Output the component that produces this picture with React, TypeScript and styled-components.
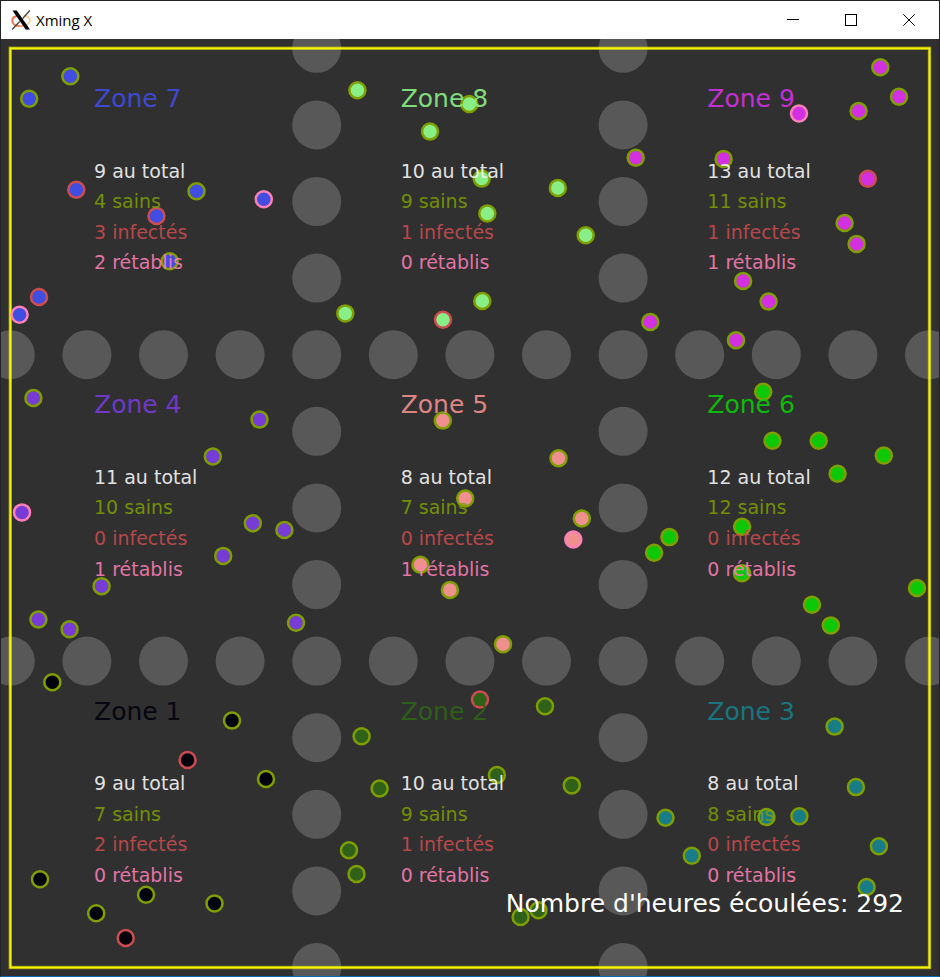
import React from "react";
import styled, { createGlobalStyle } from "styled-components";

const GlobalStyle = createGlobalStyle`
  body {
    margin: 0;
    background: #1f1e20;
    font-family: "DejaVu Sans", Verdana, sans-serif;
  }
`;

type Status = "sain" | "infecte" | "retabli";

const statusColor: Record<Status, string> = {
  sain: "#7f9f00",
  infecte: "#cc4c50",
  retabli: "#ff80b8",
};

/* x, y and, when the person is not healthy, the status */
type Person = [number, number, Status?];

interface Zone {
  id: number;
  color: string;
  people: Person[];
}

const zones: Zone[] = [
  {
    id: 7,
    color: "#414ce0",
    people: [
      [70.3, 76.3], [29.2, 98.7], [76.3, 189.7, "infecte"], [196.5, 191.3],
      [263.8, 199.2, "retabli"], [156.5, 216, "infecte"], [169.7, 261.3],
      [39, 297, "infecte"], [19.6, 314.7, "retabli"],
    ],
  },
  {
    id: 8,
    color: "#8aee86",
    people: [
      [357.4, 90.2], [469.3, 104], [430, 131.6], [481.7, 178.6], [557.8, 188],
      [487.3, 213.5], [585.7, 235.3], [482.3, 301], [345.3, 313.4],
      [443, 319.8, "infecte"],
    ],
  },
  {
    id: 9,
    color: "#d330e2",
    people: [
      [880.3, 67.3], [899, 96.7], [858.6, 111], [799, 113.5, "retabli"],
      [635.7, 157.7], [723.6, 159], [867.8, 178.8, "infecte"], [844.6, 223],
      [856.6, 243.9], [743.1, 281], [768.6, 301.6], [650.3, 322], [736, 340.2],
    ],
  },
  {
    id: 4,
    color: "#773bd6",
    people: [
      [33.4, 398], [259.5, 419.6], [212.8, 456.5], [22, 512.4, "retabli"],
      [252.8, 523.2], [284.4, 530], [223.2, 555.9], [101.6, 586.2],
      [38.4, 619.5], [69.6, 629.3], [296, 622.7],
    ],
  },
  {
    id: 5,
    color: "#ef8f8e",
    people: [
      [442.8, 420.6], [558.5, 458.2], [465.2, 498.5], [581.8, 518.5],
      [573.3, 539.5, "retabli"], [420.4, 564.8], [449.9, 590], [503, 644.2],
    ],
  },
  {
    id: 6,
    color: "#0cc807",
    people: [
      [763.2, 391.8], [772.5, 440.7], [818.7, 440.7], [883.8, 455.5],
      [837.6, 473.8], [742.1, 526.8], [669.4, 537.1], [654.1, 552.7],
      [742, 573.3], [917, 588], [812, 604.8], [830.8, 625.4],
    ],
  },
  {
    id: 1,
    color: "#02020c",
    people: [
      [52.3, 682.3], [232, 720.6], [187.6, 760, "infecte"], [266, 779],
      [40, 879.3], [146, 894.7], [96.2, 913.3], [214.5, 903.4],
      [125.7, 938, "infecte"],
    ],
  },
  {
    id: 2,
    color: "#2f6218",
    people: [
      [480, 699.5, "infecte"], [545, 706.2], [361.6, 736.3], [496.9, 775],
      [379.6, 788.5], [571.8, 785.4], [349, 850.3], [356.5, 874],
      [538.5, 910.3], [520.6, 917],
    ],
  },
  {
    id: 3,
    color: "#187d87",
    people: [
      [834.6, 726.6], [855.9, 787.1], [665.5, 817.7], [766.5, 817],
      [799.4, 816.3], [878.9, 846.3], [691.8, 855.8], [866.6, 887],
    ],
  },
];

const field = { x: 10.3, y: 48.3, size: 919.2 };
const third = field.size / 3;
const step = field.size / 12;

const pillars: [number, number][] = [];
for (const line of [1, 2]) {
  for (let i = 0; i <= 12; i++) {
    pillars.push([field.x + i * step, field.y + line * third]);
    if (i !== 4 && i !== 8) {
      pillars.push([field.x + line * third, field.y + i * step]);
    }
  }
}

const Window = styled.div`
  display: flex;
  flex-direction: column;
  border: 1px solid #232224;
  border-bottom-color: #0a69b4;
`;

const TitleBar = styled.header`
  display: flex;
  align-items: center;
  height: 38px;
  padding: 0 1px 0 10px;
  background: #fff;
  color: #000;
`;

const Logo = styled.svg`
  width: 20px;
  height: 20px;
`;

const WindowTitle = styled.h1`
  flex: 1;
  margin: 0 0 0 5px;
  font: 400 15px/20px "Open Sans", "Segoe UI", sans-serif;
`;

const WindowButton = styled.button`
  display: grid;
  place-items: center;
  width: 58px;
  height: 100%;
  padding: 0;
  border: 0;
  background: transparent;
  color: #000;

  &:hover {
    background: #e5e5e5;
  }
`;

const ButtonIcon = styled.svg`
  width: 12px;
  height: 12px;
  fill: none;
  stroke: currentColor;
`;

const Arena = styled.main`
  display: grid;
  background: #303030;

  & > * {
    grid-area: 1 / 1;
  }
`;

const Population = styled.svg`
  display: block;
  width: 100%;
`;

const ZoneGrid = styled.div`
  display: grid;
  grid-template: repeat(3, 1fr) / repeat(3, 1fr);
  padding: 9px;
`;

const ZonePanel = styled.section`
  display: grid;
  grid-template-rows: 35% repeat(4, 10%);
  align-items: center;
  padding-left: 84px;
`;

const ZoneName = styled.h2<{ $color: string }>`
  align-self: start;
  margin: 35px 0 0;
  font-size: 25px;
  font-weight: 400;
  line-height: 32px;
  color: ${(p) => p.$color};
  opacity: 0.9;
`;

const Stat = styled.p<{ $color: string }>`
  margin: 0;
  font-size: 19px;
  line-height: 24px;
  color: ${(p) => p.$color};
  opacity: 0.86;
`;

const Elapsed = styled.p`
  place-self: end;
  margin: 0 35px 56px;
  font-size: 25px;
  line-height: 32px;
  color: #fff;
`;

function XLogo() {
  return (
    <Logo viewBox="0 0 20 20" aria-hidden="true">
      <path d="M8 5.500C3.500 6 1.200 8.300 1.300 11c.2 2.800 3 4.800 7 5" fill="none" stroke="#ee7350" strokeWidth="2" />
      <path d="M12.500 5.500c4 .5 6.500 2.500 6.400 5-.1 3-3 5-7.500 5.500" fill="none" stroke="#f9cf9f" strokeWidth="1.800" />
      <path d="M8 16c1.500.2 2.500.2 4 0" fill="none" stroke="#f3a070" strokeWidth="1.800" />
      <path d="M1.500.5h4.300L19 19.500h-4.300z" fill="#000" />
      <path d="M18.800.5L11.500 8.700M8.700 11.500L1.200 19.500" fill="none" stroke="#444" strokeWidth="1.300" />
    </Logo>
  );
}

function PopulationMap() {
  return (
    <Population viewBox="1 39 938 937" role="img" aria-label="Population par zone">
      {pillars.map(([x, y]) => (
        <circle key={`${x}-${y}`} cx={x} cy={y} r={24.5} fill="#585858" />
      ))}
      <g fill="none" stroke="#ffff00">
        <rect x={field.x} y={field.y} width={field.size} height={field.size} strokeWidth={3.4} strokeOpacity={0.5} />
        <rect x={field.x} y={field.y} width={field.size} height={field.size} strokeWidth={1.8} strokeOpacity={0.9} />
      </g>
      {zones.map((zone) =>
        zone.people.map(([x, y, status = "sain"]) => (
          <circle
            key={`${x}-${y}`}
            cx={x}
            cy={y}
            r={8}
            fill={zone.color}
            stroke={statusColor[status]}
            strokeWidth={2.5}
          />
        ))
      )}
    </Population>
  );
}

function ZoneSummary({ zone }: { zone: Zone }) {
  const count = (wanted: Status) =>
    zone.people.filter(([, , status = "sain"]) => status === wanted).length;

  return (
    <ZonePanel>
      <ZoneName $color={zone.color}>Zone {zone.id}</ZoneName>
      <Stat $color="#ffffff">{zone.people.length} au total</Stat>
      <Stat $color={statusColor.sain}>{count("sain")} sains</Stat>
      <Stat $color={statusColor.infecte}>{count("infecte")} infectés</Stat>
      <Stat $color={statusColor.retabli}>{count("retabli")} rétablis</Stat>
    </ZonePanel>
  );
}

export default function App() {
  return (
    <Window>
      <GlobalStyle />
      <TitleBar>
        <XLogo />
        <WindowTitle>Xming X</WindowTitle>
        <WindowButton aria-label="Réduire">
          <ButtonIcon viewBox="0 0 12 12">
            <path d="M0 5.500h12" />
          </ButtonIcon>
        </WindowButton>
        <WindowButton aria-label="Agrandir">
          <ButtonIcon viewBox="0 0 12 12">
            <rect x=".5" y=".5" width="11" height="11" />
          </ButtonIcon>
        </WindowButton>
        <WindowButton aria-label="Fermer">
          <ButtonIcon viewBox="0 0 12 12">
            <path d="M.3.3l11.400 11.400M11.700.3L.3 11.700" />
          </ButtonIcon>
        </WindowButton>
      </TitleBar>
      <Arena>
        <PopulationMap />
        <ZoneGrid>
          {zones.map((zone) => (
            <ZoneSummary key={zone.id} zone={zone} />
          ))}
        </ZoneGrid>
        <Elapsed>Nombre d'heures écoulées: 292</Elapsed>
      </Arena>
    </Window>
  );
}
